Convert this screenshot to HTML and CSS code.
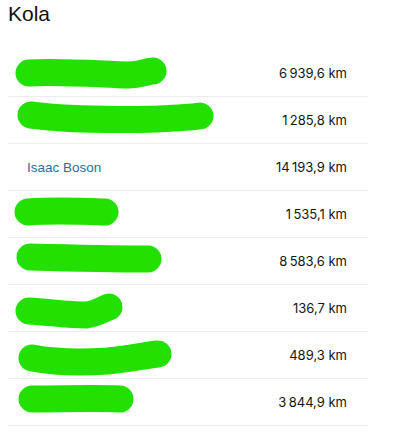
FILE: index.html
```html
<!DOCTYPE html>
<html lang="en">
<head>
  <meta charset="UTF-8" />
  <meta name="viewport" content="width=device-width, initial-scale=1.0"/>
  <title>Kola</title>
  <link rel="stylesheet" href="styles.css">
</head>
<body>

  <h1>Kola</h1>

  <ul class="rides">
    <li>
      <span class="name"><svg class="mark" viewBox="0 0 220 46"><path d="M21 23 C50 21 90 24 120 25 C132 25 140 21 145 21"/></svg></span>
      <span class="dist">6&#8239;939,6 km</span>
    </li>
    <li>
      <span class="name"><svg class="mark" viewBox="0 0 220 46"><path d="M23 18 C60 23 110 23 150 22 C170 21 185 20 192 19"/></svg></span>
      <span class="dist">1&#8239;285,8 km</span>
    </li>
    <li>
      <span class="name"><a href="#">Isaac Boson</a></span>
      <span class="dist">14&#8239;193,9 km</span>
    </li>
    <li>
      <span class="name"><svg class="mark" viewBox="0 0 220 46"><path d="M20 21 C45 19 70 20 97 21"/></svg></span>
      <span class="dist">1&#8239;535,1 km</span>
    </li>
    <li>
      <span class="name"><svg class="mark" viewBox="0 0 220 46"><path d="M22 19 C60 20 105 21 140 21"/></svg></span>
      <span class="dist">8&#8239;583,6 km</span>
    </li>
    <li>
      <span class="name"><svg class="mark" viewBox="0 0 220 46"><path d="M21 26 C40 27 60 30 78 30 C88 29 95 24 101 22"/></svg></span>
      <span class="dist">136,7 km</span>
    </li>
    <li>
      <span class="name"><svg class="mark" viewBox="0 0 220 46"><path d="M24 26 C45 30 70 31 100 29 C125 26 140 23 150 22"/></svg></span>
      <span class="dist">489,3 km</span>
    </li>
    <li>
      <span class="name"><svg class="mark" viewBox="0 0 220 46"><path d="M24 20 C55 20 85 19 112 20"/></svg></span>
      <span class="dist">3&#8239;844,9 km</span>
    </li>
  </ul>

</body>
</html>
```

FILE: styles.css
```css
body {
  font-family: "Liberation Sans", Arial, sans-serif;
  margin: 0;
  padding: 0 8px;
  background: #fff;
  color: #111;
}
h1 {
  font-size: 21px;
  font-weight: normal;
  margin: 2px 0 24px;
  line-height: 24px;
}
.rides {
  list-style: none;
  margin: 0;
  padding: 0;
  width: 360px;
}
.rides li {
  display: flex;
  align-items: center;
  justify-content: space-between;
  height: 46px;
  border-bottom: 1px solid #ececec;
}
.name {
  display: flex;
  align-items: center;
  height: 46px;
}
.name a {
  color: #2a7099;
  text-decoration: none;
  font-size: 13.5px;
  padding-left: 19px;
}
.mark {
  width: 220px;
  height: 46px;
}
.mark path {
  fill: none;
  stroke: #22e000;
  stroke-width: 27;
  stroke-linecap: round;
  stroke-linejoin: round;
}
.dist {
  font-family: Inter, "Noto Sans", sans-serif;
  font-size: 13px;
  padding-right: 21px;
  color: #151515;
}
```
